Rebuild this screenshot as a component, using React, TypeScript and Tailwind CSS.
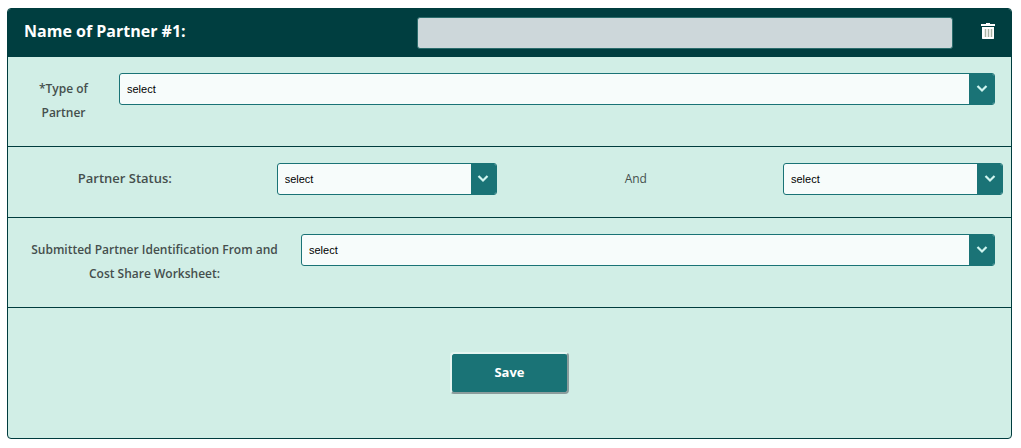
import { useState } from "react";

type SelectFieldProps = {
  id: string;
  label?: string;
  className?: string;
};

function SelectField({ id, label, className = "" }: SelectFieldProps) {
  return (
    <div
      className={`flex h-8 overflow-hidden rounded-[3px] border border-[#1a7376] bg-[#f7fcfb] ${className}`}
    >
      <select
        id={id}
        aria-label={label}
        className="min-w-0 flex-1 appearance-none bg-transparent pl-[7px] font-['Liberation_Sans',Arial,sans-serif] text-[11px] text-black outline-none"
      >
        <option>select</option>
      </select>
      <span className="pointer-events-none flex w-[25px] shrink-0 items-center justify-center bg-[#1a7376]">
        <svg width="12" height="8" viewBox="0 0 12 8" fill="none" aria-hidden="true">
          <path d="M1.5 1 6 5.500 10.500 1" stroke="#d0f5f0" strokeWidth="2.200" />
        </svg>
      </span>
    </div>
  );
}

function TrashIcon() {
  return (
    <svg width="14" height="16" viewBox="0 0 14 16" aria-hidden="true">
      <path d="M5 0h4v1h5v2H0V1h5z" fill="#fff" />
      <path d="M1 4h12v11.500l-.5.500h-11L1 15.500z" fill="#fff" />
      <path d="M4.500 6v8M7.500 6v8M10.500 6v8" stroke="#a9b3a4" strokeWidth="1.500" />
    </svg>
  );
}

export default function App() {
  const [name, setName] = useState("");

  return (
    <form
      onSubmit={(e) => e.preventDefault()}
      className="mt-2 mr-[9px] mb-2 ml-[7px] overflow-hidden rounded border border-[#003c3e] bg-[#d1eee6] font-['Open_Sans',sans-serif] text-xs text-[#454f4d]"
    >
      {/* Header */}
      <div className="flex h-12 items-center bg-[#003e40] px-4">
        <label htmlFor="partner-name" className="w-[40%] shrink-0 pb-1 text-base font-bold text-white">
          Name of Partner #1:
        </label>
        <input
          id="partner-name"
          type="text"
          value={name}
          onChange={(e) => setName(e.target.value)}
          className="ml-[5px] h-8 min-w-0 flex-1 rounded-[3px] border border-[#2b6c6c] bg-[#cdd7da] px-2 text-black outline-none"
        />
        <button type="button" aria-label="Delete partner" className="ml-7 pb-1">
          <TrashIcon />
        </button>
      </div>

      {/* Partner type */}
      <div className="flex items-start border-b border-[#003c3e] pt-4 pr-4 pb-[21px]">
        <label htmlFor="partner-type" className="w-[111px] shrink-0 px-6 pt-1 text-center leading-6 font-semibold">
          *Type of Partner
        </label>
        <SelectField id="partner-type" className="flex-1" />
      </div>

      {/* Partner status */}
      <div className="flex items-start border-b border-[#003c3e] pt-4 pr-2 pb-[22px]">
        <label htmlFor="partner-status" className="w-[27%] pr-[35px] text-center text-[13px] leading-[30px] font-semibold">
          Partner Status:
        </label>
        <SelectField id="partner-status" className="w-[220px]" />
        <span className="min-w-0 flex-1 pr-2 text-center leading-8">And</span>
        <SelectField id="partner-status-extra" label="Additional partner status" className="w-[220px]" />
      </div>

      {/* Identification form and worksheet */}
      <div className="flex items-start border-b border-[#003c3e] pt-4 pr-4 pb-[21px]">
        <label htmlFor="partner-forms" className="w-[293px] shrink-0 px-5 pt-1 text-center leading-6 font-semibold">
          Submitted Partner Identification From and Cost Share Worksheet:
        </label>
        <SelectField id="partner-forms" className="flex-1" />
      </div>

      {/* Actions */}
      <div className="flex justify-center pt-11 pb-11">
        <button
          type="submit"
          className="h-[42px] w-[119px] rounded border-2 border-t-[#e6f5f1] border-r-[#8b9c9c] border-b-[#8b9c9c] border-l-[#e6f5f1] bg-[#1a7376] text-[13px] font-bold text-white"
        >
          Save
        </button>
      </div>
    </form>
  );
}
